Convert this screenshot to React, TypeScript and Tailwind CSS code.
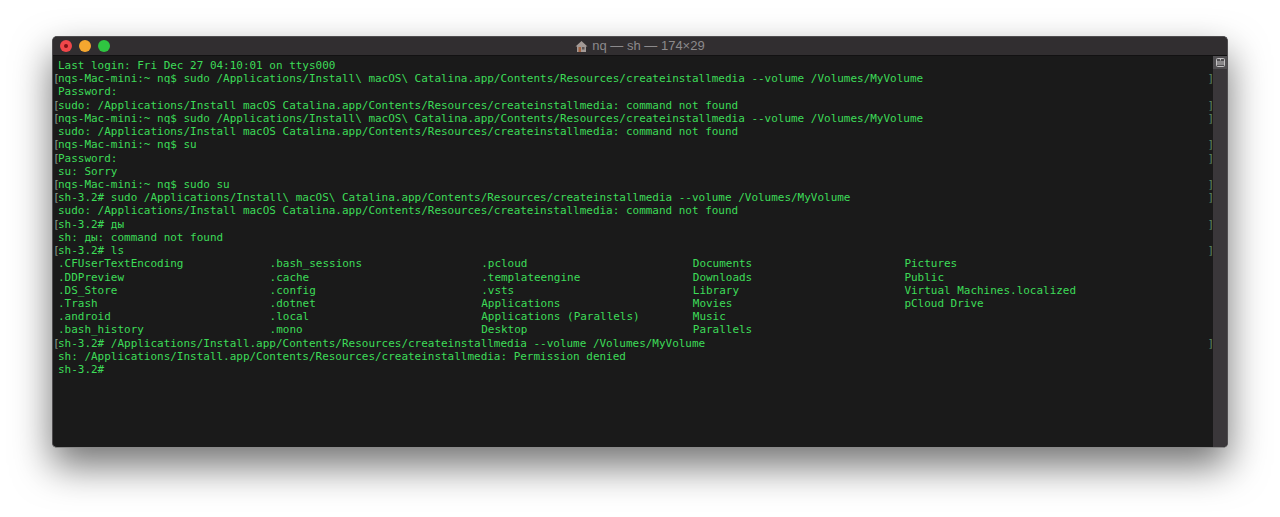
const termLines: { text: string; open?: boolean; close?: boolean }[] = [
  { text: 'Last login: Fri Dec 27 04:10:01 on ttys000' },
  { text: 'nqs-Mac-mini:~ nq$ sudo /Applications/Install\\ macOS\\ Catalina.app/Contents/Resources/createinstallmedia --volume /Volumes/MyVolume', open: true, close: true },
  { text: 'Password:' },
  { text: 'sudo: /Applications/Install macOS Catalina.app/Contents/Resources/createinstallmedia: command not found', open: true, close: true },
  { text: 'nqs-Mac-mini:~ nq$ sudo /Applications/Install\\ macOS\\ Catalina.app/Contents/Resources/createinstallmedia --volume /Volumes/MyVolume', open: true, close: true },
  { text: 'sudo: /Applications/Install macOS Catalina.app/Contents/Resources/createinstallmedia: command not found' },
  { text: 'nqs-Mac-mini:~ nq$ su', open: true, close: true },
  { text: 'Password:', open: true, close: true },
  { text: 'su: Sorry' },
  { text: 'nqs-Mac-mini:~ nq$ sudo su', open: true, close: true },
  { text: 'sh-3.2# sudo /Applications/Install\\ macOS\\ Catalina.app/Contents/Resources/createinstallmedia --volume /Volumes/MyVolume', open: true, close: true },
  { text: 'sudo: /Applications/Install macOS Catalina.app/Contents/Resources/createinstallmedia: command not found' },
  { text: 'sh-3.2# ды', open: true, close: true },
  { text: 'sh: ды: command not found' },
  { text: 'sh-3.2# ls', open: true, close: true },
]

const lsRows = [
  ['.CFUserTextEncoding', '.bash_sessions', '.pcloud', 'Documents', 'Pictures'],
  ['.DDPreview', '.cache', '.templateengine', 'Downloads', 'Public'],
  ['.DS_Store', '.config', '.vsts', 'Library', 'Virtual Machines.localized'],
  ['.Trash', '.dotnet', 'Applications', 'Movies', 'pCloud Drive'],
  ['.android', '.local', 'Applications (Parallels)', 'Music', ''],
  ['.bash_history', '.mono', 'Desktop', 'Parallels', ''],
]

const endLines: { text: string; open?: boolean; close?: boolean }[] = [
  { text: 'sh-3.2# /Applications/Install.app/Contents/Resources/createinstallmedia --volume /Volumes/MyVolume', open: true, close: true },
  { text: 'sh: /Applications/Install.app/Contents/Resources/createinstallmedia: Permission denied' },
  { text: 'sh-3.2#' },
]

function Line({ text, open, close }: { text: string; open?: boolean; close?: boolean }) {
  return (
    <div className="flex h-[13.23px] items-center">
      <span className="w-[5px] text-[#8a9a8c]">{open ? '[' : ''}</span>
      <span className="whitespace-pre">{text}</span>
      {close && <span className="ml-auto mr-[-1px] text-[#5d8a66]">]</span>}
    </div>
  )
}

export default function App() {
  return (
    <div className="h-[517px] w-full overflow-hidden bg-white px-[52px] pt-[36px]">
      <div className="flex h-[412px] w-[1176px] flex-col overflow-hidden rounded-[5px] border border-[#4f4d4f] border-b-[#8a8a8a] bg-[#1a1a1a] shadow-[0_18px_38px_rgba(0,0,0,0.55)]">
        {/* title bar */}
        <div className="relative flex h-[19px] shrink-0 items-center justify-center border-b border-[#121112] bg-[#312e30]">
          <div className="absolute left-[7px] top-[3px] flex gap-[7px]">
            <span className="flex h-[12px] w-[12px] items-center justify-center rounded-full bg-[#f1474a]">
              <span className="h-[4px] w-[4px] rounded-full bg-[#7d1216]" />
            </span>
            <span className="h-[12px] w-[12px] rounded-full bg-[#f5a72f]" />
            <span className="h-[12px] w-[12px] rounded-full bg-[#2fc541]" />
          </div>
          <div className="flex items-center gap-[4px] font-['Liberation_Sans',sans-serif] text-[13px] text-[#8c8a8c]">
            <svg width="13" height="13" viewBox="0 0 13 13">
              <path d="M6.5 1 L12.5 6.5 L11 6.5 L11 12 L2 12 L2 6.5 L0.5 6.5 Z" fill="#a39a96" />
              <rect x="3.5" y="7" width="2.5" height="5" fill="#a0603f" />
              <rect x="7" y="7" width="2.5" height="2.5" fill="#5c5656" />
            </svg>
            <span>nq — sh — 174×29</span>
          </div>
        </div>
        <div className="flex min-h-0 flex-1">
          {/* terminal text */}
          <div className="min-w-0 flex-1 pt-[3px] font-['DejaVu_Sans_Mono',monospace] text-[10.975px] leading-[13.23px] text-[#3ddc58]">
            {termLines.map((l, i) => (
              <Line key={i} text={l.text} open={l.open} close={l.close} />
            ))}
            {lsRows.map((row, i) => (
              <div key={i} className="flex h-[13.23px] items-center pl-[5px]">
                {row.map((name, j) => (
                  <span key={j} className="w-[211.6px] whitespace-pre">{name}</span>
                ))}
              </div>
            ))}
            {endLines.map((l, i) => (
              <Line key={i} text={l.text} open={l.open} close={l.close} />
            ))}
          </div>
          {/* scrollbar */}
          <div className="w-[14px] shrink-0 bg-[#3a373a]">
            <div className="flex h-[13px] items-center justify-center bg-[#504e51]">
              <svg width="11" height="11" viewBox="0 0 11 11" fill="none" stroke="#c4c2c4" strokeWidth="1">
                <rect x="1.5" y="1.5" width="8" height="8" rx="1" />
                <path d="M1.5 5 H9.5 M1.5 7 H9.5 M5.5 1.5 V3.5" />
              </svg>
            </div>
          </div>
        </div>
      </div>
    </div>
  )
}
